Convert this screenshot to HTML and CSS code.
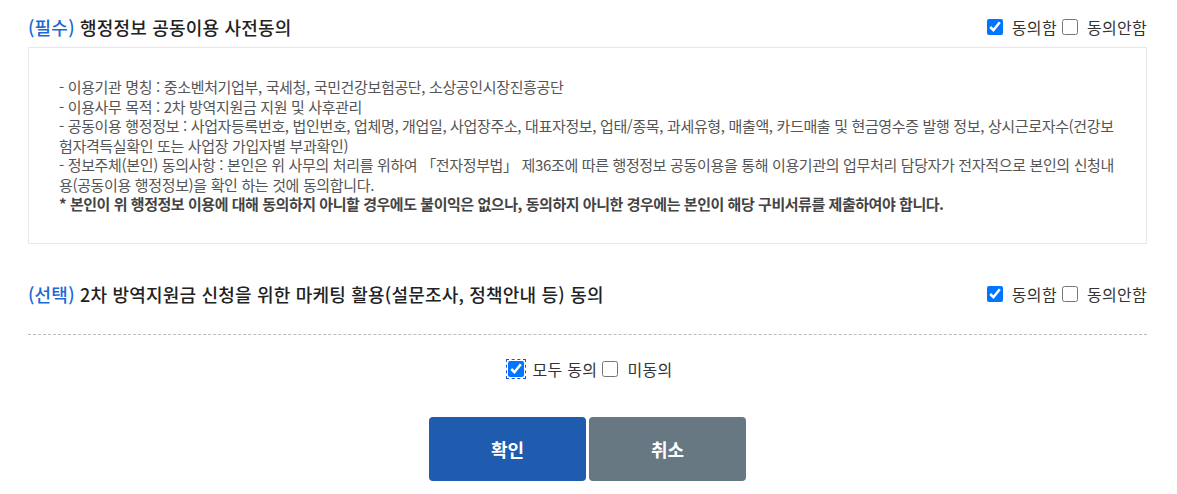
FILE: index.html
```html
<!DOCTYPE html>
<html lang="ko">
<head>
    <meta charset="UTF-8">
    <meta name="viewport" content="width=device-width, initial-scale=1.0">
    <title>행정정보 공동이용 동의</title>
    <link rel="stylesheet" href="styles.css">
</head>
<body>
    <div class="agree-wrap">
        <!-- 필수 동의 -->
        <div class="agree-head">
            <h3 class="agree-title"><span class="tag">(필수)</span> 행정정보 공동이용 사전동의</h3>
            <div class="agree-choice">
                <input type="checkbox" class="chk" checked><label>동의함</label>
                <input type="checkbox" class="chk"><label>동의안함</label>
            </div>
        </div>
        <div class="agree-box">
            <p>- 이용기관 명칭 : 중소벤처기업부, 국세청, 국민건강보험공단, 소상공인시장진흥공단</p>
            <p>- 이용사무 목적 : 2차 방역지원금 지원 및 사후관리</p>
            <p>- 공동이용 행정정보 : 사업자등록번호, 법인번호, 업체명, 개업일, 사업장주소, 대표자정보, 업태/종목, 과세유형, 매출액, 카드매출 및 현금영수증 발행 정보, 상시근로자수(건강보험자격득실확인 또는 사업장 가입자별 부과확인)</p>
            <p>- 정보주체(본인) 동의사항 : 본인은 위 사무의 처리를 위하여 「전자정부법」 제36조에 따른 행정정보 공동이용을 통해 이용기관의 업무처리 담당자가 전자적으로 본인의 신청내용(공동이용 행정정보)을 확인 하는 것에 동의합니다.</p>
            <p class="strong">* 본인이 위 행정정보 이용에 대해 동의하지 아니할 경우에도 불이익은 없으나, 동의하지 아니한 경우에는 본인이 해당 구비서류를 제출하여야 합니다.</p>
        </div>

        <!-- 선택 동의 -->
        <div class="agree-head second">
            <h3 class="agree-title"><span class="tag">(선택)</span> 2차 방역지원금 신청을 위한 마케팅 활용(설문조사, 정책안내 등) 동의</h3>
            <div class="agree-choice">
                <input type="checkbox" class="chk" checked><label>동의함</label>
                <input type="checkbox" class="chk"><label>동의안함</label>
            </div>
        </div>

        <div class="divider"></div>

        <div class="agree-all">
            <input type="checkbox" class="chk focus" checked><label>모두 동의</label>
            <input type="checkbox" class="chk"><label>미동의</label>
        </div>

        <div class="btns">
            <button class="btn btn-ok">확인</button>
            <button class="btn btn-cancel">취소</button>
        </div>
    </div>
</body>
</html>
```

FILE: styles.css
```css
*{
    margin: 0;
    padding: 0;
    box-sizing: border-box;
}
body{
    font-family: "Noto Sans CJK KR", "Noto Sans", sans-serif;
    color: #222;
    background: #fff;
}
.agree-wrap{
    margin: 0 30px 0 28px;
    padding-top: 12px;
}
.agree-head{
    height: 30px;
    display: flex;
    align-items: center;
    justify-content: space-between;
}
.agree-head.second{
    margin-top: 35px;
}
.agree-title{
    font-size: 18px;
    font-weight: 500;
    color: #222;
    letter-spacing: 0.2px;
}
.agree-title .tag{
    color: #1a6ad6;
}
.agree-choice{
    display: flex;
    align-items: center;
    font-size: 16px;
    letter-spacing: 0.3px;
    color: #333;
}
.chk{
    width: 16px;
    height: 16px;
    margin: 0 9px 0 5px;
    accent-color: #0075ff;
}
.chk.focus{
    outline: 1px dashed #1a4fd6;
    outline-offset: 1px;
}
.agree-box{
    margin-top: 5px;
    border: 1px solid #e8e8e8;
    padding: 29px 30px;
    font-size: 15px;
    line-height: 19.5px;
    letter-spacing: -0.35px;
    color: #555;
}
.agree-box .strong{
    font-weight: 700;
    letter-spacing: -0.45px;
    color: #444;
}
.divider{
    margin-top: 25px;
    border-top: 1px dashed #bbb;
}
.agree-all{
    margin-top: 19px;
    height: 30px;
    display: flex;
    align-items: center;
    justify-content: center;
    font-size: 16px;
    letter-spacing: 0.3px;
    color: #333;
}
.btns{
    margin-top: 33px;
    display: flex;
    justify-content: center;
    gap: 3px;
}
.btn{
    width: 157px;
    height: 64px;
    border: none;
    border-radius: 4px;
    font-family: "Noto Sans CJK KR", "Noto Sans", sans-serif;
    font-size: 18px;
    font-weight: 700;
    color: #fff;
    cursor: pointer;
}
.btn-ok{
    background-color: #1f5baf;
}
.btn-cancel{
    background-color: #687882;
}
```
